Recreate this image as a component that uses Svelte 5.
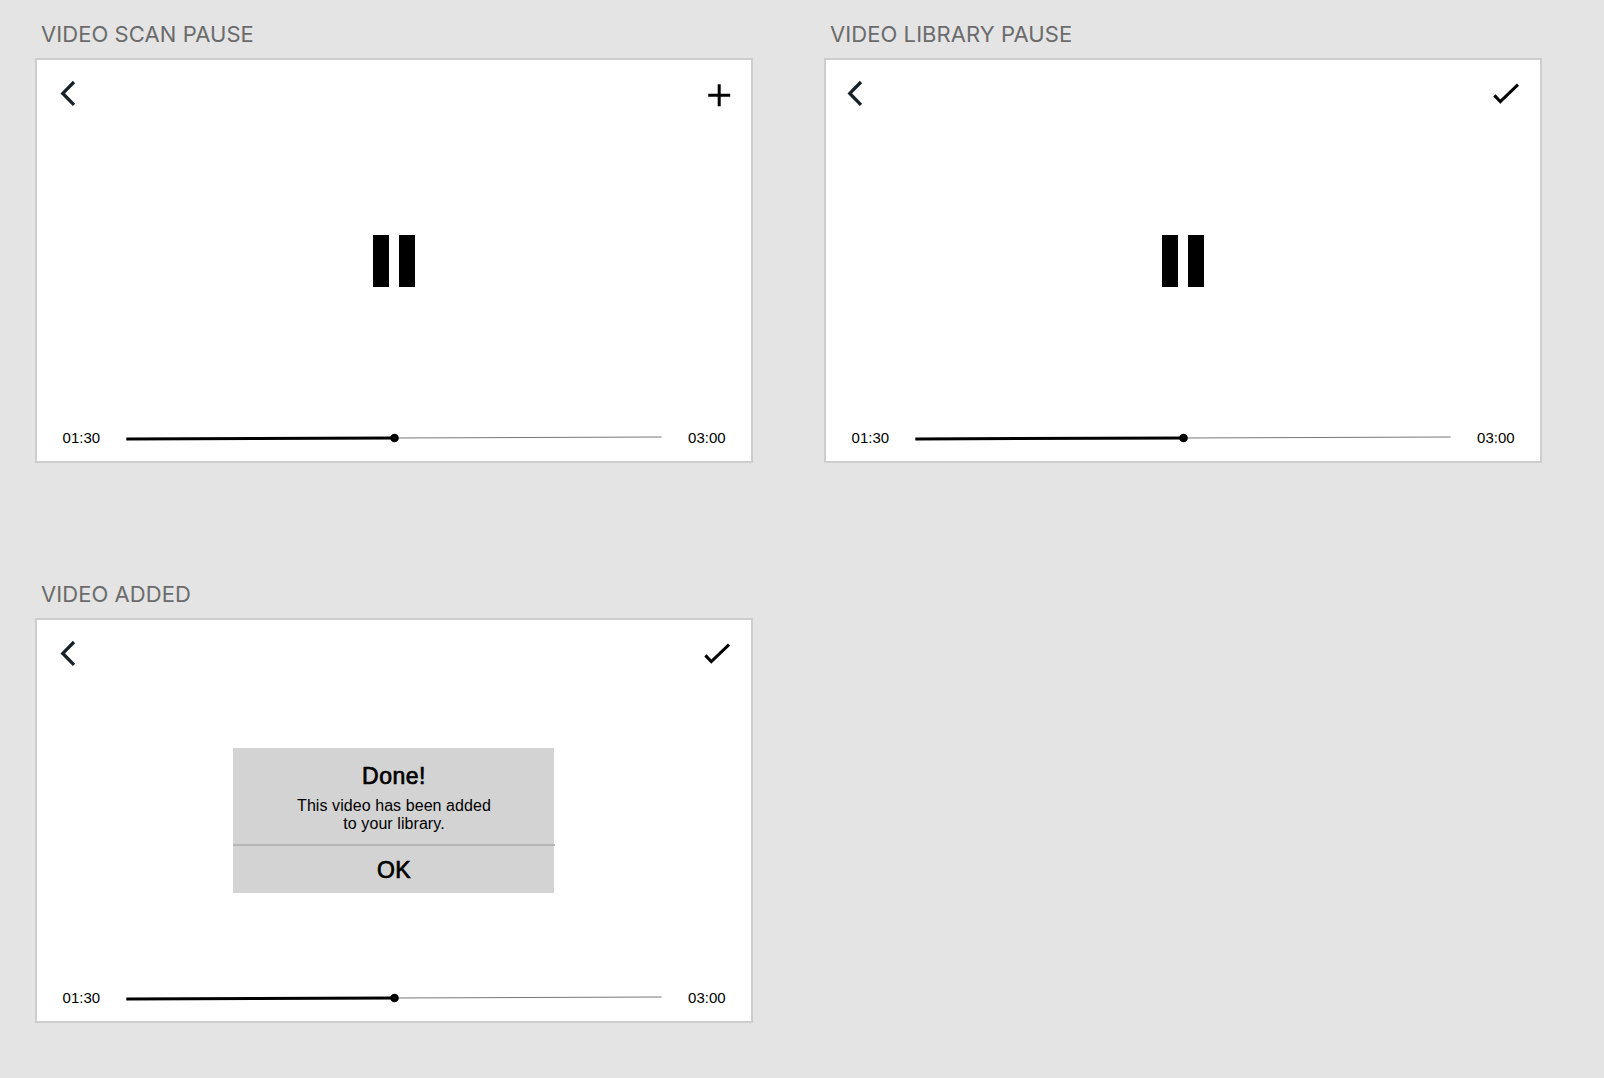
<script>
  const screens = [
    { title: 'VIDEO SCAN PAUSE', action: 'add', dialog: false, tight: false },
    { title: 'VIDEO LIBRARY PAUSE', action: 'check', dialog: false, tight: true },
    { title: 'VIDEO ADDED', action: 'check', dialog: true, tight: false }
  ];
</script>

<main>
  {#each screens as screen}
    <section>
      <h2>{screen.title}</h2>
      <div class="card">
        <header class:tight={screen.tight}>
          <svg class="back" width="20" height="28" viewBox="0 0 20 28" aria-label="Back">
            <path d="M16 3 4.8 14.4 16 25.8" />
          </svg>
          {#if screen.action === 'add'}
            <svg class="action" width="30" height="28" viewBox="0 0 30 28" aria-label="Add">
              <path d="M5.2 16.2H27.2M16.2 5.2V27.2" />
            </svg>
          {:else}
            <svg class="action" width="30" height="28" viewBox="0 0 30 28" aria-label="Added">
              <path d="M2.4 16.4 8.3 22.6 26 5.6" />
            </svg>
          {/if}
        </header>

        <div class="stage">
          {#if screen.dialog}
            <div class="dialog">
              <div class="message">
                <h3>Done!</h3>
                <p>This video has been added<br />to your library.</p>
              </div>
              <button>OK</button>
            </div>
          {:else}
            <div class="pause"><i></i><i></i></div>
          {/if}
        </div>

        <footer>
          <time>01:30</time>
          <svg class="track" width="536" height="12" viewBox="0 0 536 12">
            <path class="rest" d="M268 6 535.6 5" />
            <path class="played" d="M.3 7 268 6" />
            <circle cx="268.5" cy="6" r="4.3" />
          </svg>
          <time>03:00</time>
        </footer>
      </div>
    </section>
  {/each}
</main>

<style>
  :global(body) {
    margin: 0;
    background: #e4e4e4;
  }

  main {
    box-sizing: border-box;
    width: 1604px;
    height: 1078px;
    padding: 18px 0 0 35px;
    background: #e4e4e4;
    display: grid;
    grid-template-columns: 718px 718px;
    grid-template-rows: 445px 445px;
    gap: 115px 71px;
    overflow: hidden;
  }

  h2 {
    margin: 0;
    height: 40px;
    padding-left: 6px;
    font: 400 22px/33px Inter, sans-serif;
    letter-spacing: 0.07px;
    color: #6b6b6b;
    white-space: nowrap;
  }

  .card {
    box-sizing: border-box;
    width: 718px;
    height: 405px;
    border: 2px solid #cdcdcd;
    background: #fff;
    display: flex;
    flex-direction: column;
    font-family: "Liberation Sans", Arial, sans-serif;
    color: #000;
  }

  header {
    display: flex;
    justify-content: space-between;
    height: 47px;
    padding: 19px 18px 0 21px;
  }

  header.tight {
    padding-left: 19px;
  }

  svg {
    display: block;
  }

  path {
    fill: none;
    stroke: #000;
    stroke-width: 3;
  }

  .back path {
    stroke: #172126;
    stroke-width: 3.3;
  }

  .stage {
    flex: 1;
    display: flex;
    justify-content: center;
  }

  .pause {
    display: flex;
    gap: 10px;
    height: 52px;
    margin-top: 109px;
  }

  .pause i {
    width: 16px;
    background: #000;
  }

  .dialog {
    width: 321px;
    height: 144.5px;
    margin: 62px 1px 0 0;
    background: #d3d3d3;
    text-align: center;
  }

  .message {
    box-sizing: border-box;
    width: 322px;
    height: 98px;
    padding-top: 15px;
    border-bottom: 2px solid #b5b5b5;
  }

  h3 {
    margin: 0;
    font-size: 23px;
    font-weight: 400;
    line-height: 27px;
    letter-spacing: 0.5px;
    -webkit-text-stroke: 0.7px #000;
  }

  p {
    margin: 7px 0 0;
    font-size: 16px;
    line-height: 18px;
    letter-spacing: 0.07px;
  }

  button {
    display: block;
    width: 322px;
    height: 46px;
    padding: 2px 0 0;
    border: 0;
    background: none;
    color: #000;
    font: 400 23px/44px "Liberation Sans", Arial, sans-serif;
    letter-spacing: 0.5px;
    -webkit-text-stroke: 0.7px #000;
  }

  footer {
    display: flex;
    align-items: center;
    height: 46px;
    padding: 0 25.4px 0 25.6px;
    justify-content: space-between;
  }

  time {
    font-size: 15px;
    line-height: 18px;
  }

  .rest {
    stroke: #777;
    stroke-width: 1;
  }
</style>
